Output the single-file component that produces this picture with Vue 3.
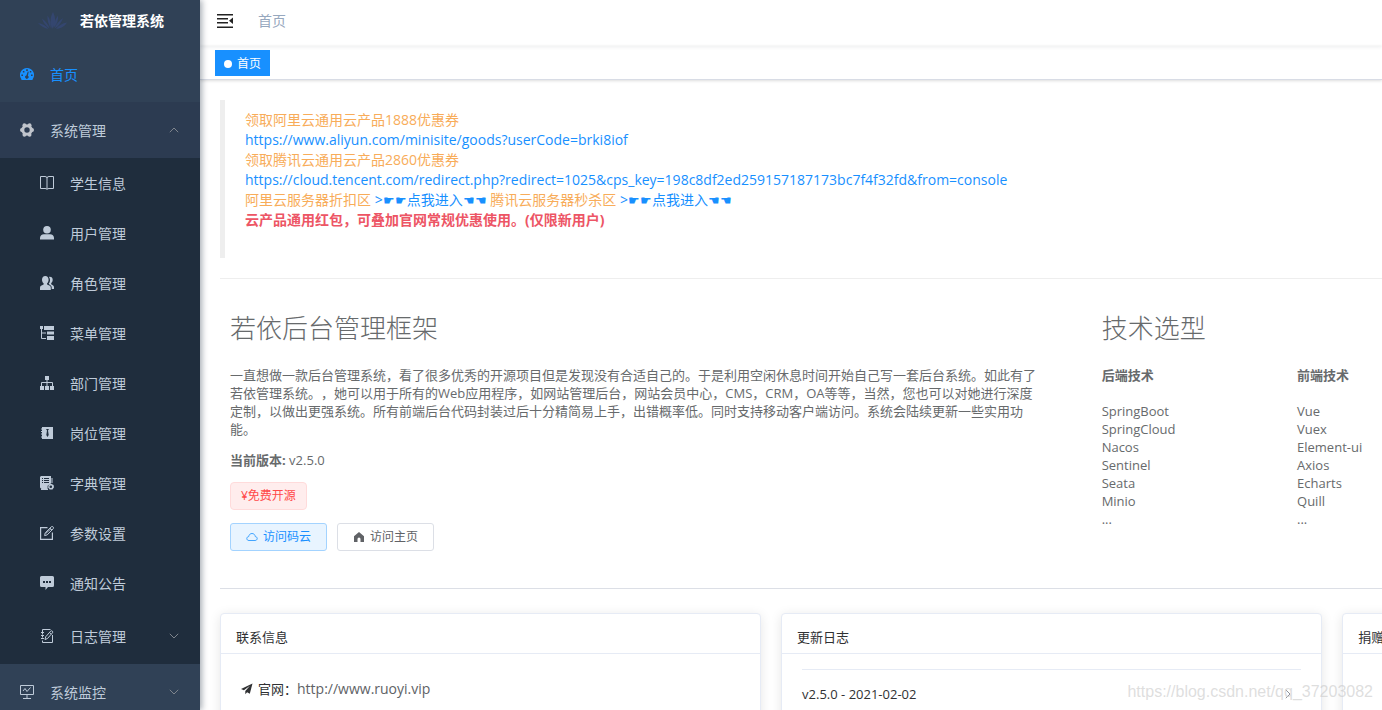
<script setup>
const systemMenu = [
  { label: '学生信息', icon: 'book' },
  { label: '用户管理', icon: 'user' },
  { label: '角色管理', icon: 'peoples' },
  { label: '菜单管理', icon: 'tree-table' },
  { label: '部门管理', icon: 'tree' },
  { label: '岗位管理', icon: 'post' },
  { label: '字典管理', icon: 'dict' },
  { label: '参数设置', icon: 'edit' },
  { label: '通知公告', icon: 'message' }
]
const stacks = [
  { title: '后端技术', items: ['SpringBoot', 'SpringCloud', 'Nacos', 'Sentinel', 'Seata', 'Minio', '...'] },
  { title: '前端技术', items: ['Vue', 'Vuex', 'Element-ui', 'Axios', 'Echarts', 'Quill', '...'] }
]
</script>

<template>
  <div class="shell">
    <svg class="sprite" aria-hidden="true">
      <symbol id="dashboard" viewBox="0 0 14 14">
        <path fill-rule="evenodd" fill="currentColor" d="M7 1a7 7 0 0 1 6 10.600L12.400 13H1.600L1 11.600A7 7 0 0 1 7 1zM6.200 2.200v1.800h1.600V2.200zM2.900 3.900v1.500h1.500V3.900zM9.800 3.900v1.500h1.500V3.900zM1.400 7.600v1.500h1.600V7.600zM11 7.600v1.500h1.600V7.600zM7.800 4.600L6.400 8.400a1.700 1.700 0 1 0 1.500.3l.8-3.900z" />
      </symbol>
      <symbol id="system" viewBox="0 0 14 14">
        <circle cx="7" cy="7" r="4.200" fill="none" stroke="currentColor" stroke-width="3" />
        <g fill="currentColor">
          <circle cx="12.100" cy="7" r="1.900" /><circle cx="1.900" cy="7" r="1.900" />
          <circle cx="9.600" cy="2.200" r="1.900" /><circle cx="4.400" cy="2.200" r="1.900" />
          <circle cx="9.600" cy="11.800" r="1.900" /><circle cx="4.400" cy="11.800" r="1.900" />
        </g>
      </symbol>
      <symbol id="book" viewBox="0 0 14 14">
        <path fill="none" stroke="currentColor" d="M.5.500H5q2 0 2 1.500Q7 .500 9 .500h4.500v12H9q-2 0-2 1 0-1-2-1H.5z" />
        <path fill="none" stroke="currentColor" stroke-width="2" opacity=".5" d="M7 2v11" />
      </symbol>
      <symbol id="user" viewBox="0 0 14 14">
        <circle cx="7" cy="3.800" r="3.800" fill="currentColor" />
        <path fill="currentColor" d="M0 13.600V12c0-2.300 1.600-3.700 4-3.700h6c2.400 0 4 1.400 4 3.700v1.600z" />
      </symbol>
      <symbol id="peoples" viewBox="0 0 14 14">
        <path fill="currentColor" d="M5.300 0c2 0 3.300 1.500 3.300 3.700 0 1.600-.6 2.800-1.500 3.500v1.300l2.700 1.300c.7.400 1 1 1 1.900v2.300H0v-2.300c0-.9.300-1.500 1-1.900l2.600-1.300V7.200C2.600 6.500 2 5.300 2 3.700 2 1.500 3.300 0 5.300 0z" />
        <path fill="currentColor" d="M9 .9c2.200-.4 3.700.8 3.700 2.800 0 1.500-.6 2.700-1.500 3.400v1.100l2 1.200c.5.300.8.900.8 1.600v2h-2.300v-1.500c0-1-.5-1.900-1.300-2.300L8.800 8V7.600c1.400-1.500 1.800-4.400.2-6.700z" />
      </symbol>
      <symbol id="tree-table" viewBox="0 0 14 14">
        <path fill="currentColor" d="M0 0h3v3H0zM4 0h10v4H4zM7 5.500h7v3H7zM7 10h7v4H7z" />
        <path fill="none" stroke="currentColor" d="M1.500 3v9.500H6M1.500 7H6" />
      </symbol>
      <symbol id="tree" viewBox="0 0 14 14">
        <path fill="currentColor" d="M5 0h4v4H5zM0 10h4v4H0zM5 10h4v4H5zM10 10h4v4h-4z" />
        <path fill="none" stroke="currentColor" d="M7 4v6M1.500 10V6.500h11V10" />
      </symbol>
      <symbol id="post" viewBox="0 0 14 14">
        <path fill-rule="evenodd" fill="currentColor" d="M2 1h11v12H2v-1.500H1v-1h1V8.500H1v-1h1V6H1V5h1V3.500H1v-1h1zM6 3l1 1.500L6.300 9l1.200 2 1.200-2L8 4.500 9 3z" />
      </symbol>
      <symbol id="dict" viewBox="0 0 14 14">
        <path fill-rule="evenodd" fill="currentColor" d="M1 0h10v7.300L7.600 9.700V13H1.500L0 11.500V1zM2 2v1h1V2zM4 2v1h5V2zM2 4v1h1V4zM4 4v1h5V4zM2 6v1h1V6zM4 6v1h5V6z" />
        <path fill-rule="evenodd" fill="currentColor" d="M10.600 7.600l3 1.300.4 2.400-1.500 2.100-2.900.2-1.500-2 .6-2.800zM10.800 9.500a1.300 1.300 0 1 0 0 2.600 1.300 1.300 0 0 0 0-2.600zM1 13h7v1H1zM11.500 2h1v5h-1z" />
      </symbol>
      <symbol id="edit" viewBox="0 0 14 14">
        <path fill="none" stroke="currentColor" stroke-width="1.200" d="M7.500 1.600H.6v11.800h11.800V6.500" />
        <path fill="none" stroke="currentColor" d="M4.600 9.600l.6-2.700L11.300.8q1-.7 1.800.1t.1 1.800L7.200 8.900zM10 2.100l1.900 1.900M5.700 7.500L11 2.700" />
      </symbol>
      <symbol id="message" viewBox="0 0 14 14">
        <path fill-rule="evenodd" fill="currentColor" d="M1.500 0h11Q14 0 14 1.500v8q0 1.500-1.500 1.500H8l-2.500 3v-3h-4Q0 11 0 9.500v-8Q0 0 1.500 0zM3 5v2h2V5zM6 5v2h2V5zM9 5v2h2V5z" />
      </symbol>
      <symbol id="log" viewBox="0 0 14 14">
        <path fill="none" stroke="currentColor" d="M2.500 3V.500h8M2.500 11.500v2h10V6M2.500 4v1.500M2.500 7v1.500M1 3.500h3M1 6.500h3M1 9.500h3" />
        <path fill="none" stroke="currentColor" d="M5 10.500l.7-2.700 5-5.700q.8-.7 1.600 0t.2 1.700L7.500 9.500zM9.500 3.500l1.800 1.600" />
      </symbol>
      <symbol id="monitor" viewBox="0 0 14 14">
        <path fill="none" stroke="currentColor" d="M.5.500h13v9H.500zM7 9.500v3.500M3 13.500h8M3 6l2-2.500L7 6.500 10.500 2.500" />
      </symbol>
      <symbol id="chevron" viewBox="0 0 10 6">
        <path fill="none" stroke="currentColor" d="M.8.800L5 5 9.200.800" />
      </symbol>
    </svg>

    <aside class="sidebar">
      <a class="logo" href="#">
        <svg class="lotus" viewBox="0 0 30 18" aria-hidden="true">
          <path d="M14 17C12 11 12 5 15 0c3 6 3 11-1 17zM12.500 16C10.500 12 9 8 9.500 3.500c3 4 3.500 8 3 12.500zM15.500 16c.5-5 2-9 4.500-12.500.5 5-1 9-4.500 12.500zM11.500 16.500C8 14 5 10.500 4 6.500c4 3 6.500 6 7.500 10zM16.500 16.500c1.500-4.500 4.500-7.500 8.500-10.500-1.500 4.500-4.500 8.500-8.500 10.500zM10.500 17C6.500 16.500 3 14 0 11c4.500.5 8 2.500 10.500 6zM18 17c2.500-3.500 6.500-6 11-6.500-2 3.500-6 6-11 6.500z" />
        </svg>
        <strong>若依管理系统</strong>
      </a>
      <nav>
        <a class="item active" href="#"><svg class="icon"><use href="#dashboard" /></svg><span>首页</span></a>
        <button class="item open" type="button">
          <svg class="icon gear"><use href="#system" /></svg><span>系统管理</span>
          <svg class="arrow up"><use href="#chevron" /></svg>
        </button>
        <div class="submenu">
          <a v-for="m in systemMenu" :key="m.label" class="item" href="#">
            <svg class="icon"><use :href="'#' + m.icon" /></svg><span>{{ m.label }}</span>
          </a>
          <button class="item group" type="button">
            <svg class="icon"><use href="#log" /></svg><span>日志管理</span>
            <svg class="arrow"><use href="#chevron" /></svg>
          </button>
        </div>
        <button class="item" type="button">
          <svg class="icon"><use href="#monitor" /></svg><span>系统监控</span>
          <svg class="arrow"><use href="#chevron" /></svg>
        </button>
      </nav>
    </aside>

    <main class="main">
      <header class="navbar">
        <button class="fold" type="button" aria-label="收起菜单">
          <svg viewBox="0 0 16 14"><path fill="currentColor" d="M0 0h16v1.500H0zM0 4h11v1.500H0zM0 8h11v1.500H0zM0 12.500h16V14H0zM16 3.500v6.500L12 6.800z" /></svg>
        </button>
        <span class="crumb">首页</span>
      </header>
      <div class="tags"><a class="tab" href="#"><i></i>首页</a></div>

      <div class="page">
        <blockquote>
          <p>领取阿里云通用云产品1888优惠券</p>
          <p><a href="#">https://www.aliyun.com/minisite/goods?userCode=brki8iof</a></p>
          <p>领取腾讯云通用云产品2860优惠券</p>
          <p><a href="#">https://cloud.tencent.com/redirect.php?redirect=1025&amp;cps_key=198c8df2ed259157187173bc7f4f32fd&amp;from=console</a></p>
          <p>
            阿里云服务器折扣区
            <a href="#">&gt;<small>☛☛</small>点我进入<small>☚☚</small></a>
            腾讯云服务器秒杀区
            <a href="#">&gt;<small>☛☛</small>点我进入<small>☚☚</small></a>
          </p>
          <p class="promo">云产品通用红包，可叠加官网常规优惠使用。(仅限新用户)</p>
        </blockquote>
        <hr>

        <div class="intro">
          <section class="about">
            <h2>若依后台管理框架</h2>
            <p>一直想做一款后台管理系统，看了很多优秀的开源项目但是发现没有合适自己的。于是利用空闲休息时间开始自己写一套后台系统。如此有了若依管理系统。，她可以用于所有的Web应用程序，如网站管理后台，网站会员中心，CMS，CRM，OA等等，当然，您也可以对她进行深度定制，以做出更强系统。所有前端后台代码封装过后十分精简易上手，出错概率低。同时支持移动客户端访问。系统会陆续更新一些实用功能。</p>
            <p class="version"><b>当前版本:</b> <span>v2.5.0</span></p>
            <span class="free">¥免费开源</span>
            <div class="actions">
              <button class="primary" type="button">
                <svg viewBox="0 0 12 12"><path fill="none" stroke="currentColor" stroke-width=".8" d="M3 9.500C1.500 9.500.8 8.600.8 7.500S1.600 5.700 2.700 5.600C3 3.700 4.200 2.500 6 2.500s3 1.200 3.300 3.100c1.100.1 1.900.8 1.900 1.900s-.8 2-2.200 2z" /></svg>
                <span>访问码云</span>
              </button>
              <button type="button">
                <svg viewBox="0 0 12 12"><path fill="currentColor" d="M6 1l5 4.300V11H7.500V8a1.500 1.500 0 0 0-3 0v3H1V5.300z" /></svg>
                <span>访问主页</span>
              </button>
            </div>
          </section>
          <section class="tech">
            <h2>技术选型</h2>
            <div class="stacks">
              <div v-for="s in stacks" :key="s.title">
                <h4>{{ s.title }}</h4>
                <ul><li v-for="i in s.items" :key="i">{{ i }}</li></ul>
              </div>
            </div>
          </section>
        </div>
        <hr class="divider">

        <div class="cards">
          <article class="card">
            <h3>联系信息</h3>
            <p class="contact">
              <svg viewBox="0 0 12 12"><path fill="currentColor" d="M11.500.5L0 6l2.900 1.300L9 2.800 4.300 7.900v3.300l1.800-2 2.700 1.600z" /></svg>
              <span>官网：</span><a href="#">http://www.ruoyi.vip</a>
            </p>
          </article>
          <article class="card">
            <h3>更新日志</h3>
            <div class="logs">
              <button type="button"><span>v2.5.0 - 2021-02-02</span><svg class="arrow right"><use href="#chevron" /></svg></button>
            </div>
          </article>
          <article class="card"><h3>捐赠</h3></article>
        </div>
      </div>
    </main>
    <span class="watermark">https://blog.csdn.net/qq_37203082</span>
  </div>
</template>

<style>
html, body { overflow: hidden; background: #fff; }
</style>

<style scoped>
* { box-sizing: border-box; }
.shell {
  display: flex;
  height: 100vh;
  position: relative;
  overflow: hidden;
  font-family: "Open Sans", "Noto Sans CJK SC", sans-serif;
  font-size: 13px;
  line-height: 18px;
  color: #676a6c;
  text-spacing-trim: space-all;
}
h2, h3, h4, p, ul, blockquote, hr { margin: 0; padding: 0; }
ul { list-style: none; }
a { color: inherit; text-decoration: none; }
button { font: inherit; color: inherit; margin: 0; cursor: pointer; }
.sprite { position: absolute; width: 0; height: 0; }

.sidebar {
  flex: none;
  width: 200px;
  background: #304156;
  box-shadow: 2px 0 6px rgba(0, 21, 41, .35);
  z-index: 2;
  overflow: hidden;
}
.logo {
  display: flex;
  align-items: center;
  gap: 12px;
  height: 46px;
  padding: 0 0 4px 38px;
  color: #fff;
  font-size: 14px;
}
.lotus { width: 30px; height: 18px; fill: #34466f; }
.item {
  display: flex;
  align-items: center;
  width: 100%;
  height: 56px;
  padding: 0 21px 0 20px;
  border: 0;
  background: #304156;
  color: #bfcbd9;
  font-size: 14px;
  text-align: left;
}
.item span { padding-top: 2px; }
.icon { width: 14px; height: 14px; margin-right: 16px; flex: none; }
.active { color: #1890ff; }
.open { background: #2c3b51; }
.gear { color: #c0c4cc; }
.submenu .item { height: 50px; padding-left: 40px; background: #1f2d3d; }
.submenu .group { height: 56px; }
.arrow { width: 10px; height: 6px; margin-left: auto; color: #909399; flex: none; }
.item .arrow { color: #7f858d; }
.up { transform: rotate(180deg); }
.right { transform: rotate(-90deg); }

.main { flex: 1; min-width: 0; overflow: hidden; }
.navbar {
  display: flex;
  align-items: center;
  height: 46px;
  padding: 0 17px 5px;
  gap: 25px;
  box-shadow: 0 1px 4px rgba(0, 21, 41, .08);
}
.fold { border: 0; padding: 0; background: none; color: #222; height: 14px; }
.fold svg { display: block; width: 16px; height: 14px; }
.crumb { font-size: 14px; color: #97a8be; }
.tags {
  height: 34px;
  padding: 4px 15px;
  border-bottom: 1px solid #d8dce5;
  box-shadow: 0 1px 3px rgba(0, 0, 0, .12), 0 0 3px rgba(0, 0, 0, .04);
}
.tab {
  display: inline-flex;
  align-items: center;
  height: 26px;
  padding: 2px 9px 0;
  background: #1890ff;
  color: #fff;
  font-size: 12px;
}
.tab i { width: 8px; height: 8px; margin-right: 5px; border-radius: 50%; background: #fff; }

/* The dashboard is wider than the visible pane and is clipped on the right. */
.page { width: 144.1%; padding: 20px; }
blockquote {
  padding: 10px 20px 28px;
  border-left: 5px solid #eee;
  font-size: 14px;
  line-height: 20px;
  color: #f8ac59;
}
blockquote p { height: 20px; }
blockquote a { color: #1890ff; }
small { font-size: 13px; line-height: 1; }
.promo { color: #ed5565; font-weight: 700; }
hr { border: 0; border-top: 1px solid #eee; margin-top: 20px; }
.intro { display: grid; grid-template-columns: 1fr 1fr; margin: 0 -10px; }
.about { padding: 31px 10px 0 20px; }
.tech { padding: 31px 10px 0 50px; }
h2 { font-size: 26px; font-weight: 300; line-height: 36px; margin-bottom: 20px; }
.version { margin: 13px 0; }
.free {
  display: inline-block;
  height: 28px;
  padding: 0 10px;
  border: 1px solid #ffdbdb;
  border-radius: 4px;
  background: #ffeded;
  color: #ff4949;
  font-size: 12px;
  line-height: 26px;
  vertical-align: top;
}
.actions { display: flex; gap: 10px; margin-top: 13px; }
.actions button {
  display: flex;
  align-items: center;
  gap: 5px;
  height: 28px;
  padding: 0 15px;
  border: 1px solid #dcdfe6;
  border-radius: 3px;
  background: #fff;
  color: #606266;
  font-size: 12px;
}
.actions svg { width: 12px; height: 12px; }
.actions .primary { color: #1890ff; background: #e8f4ff; border-color: #a3d3ff; }
.stacks { display: grid; grid-template-columns: repeat(4, 1fr); }
h4 { font-size: 13px; margin-bottom: 18px; }
.divider { border-color: #dcdfe6; margin: 37px 0 24px; }
.cards { display: grid; grid-template-columns: repeat(3, 1fr); gap: 20px; }
.card {
  min-height: 240px;
  border: 1px solid #e6ebf5;
  border-radius: 4px;
  background: #fff;
  color: #303133;
  box-shadow: 0 2px 12px rgba(0, 0, 0, .1);
}
h3 {
  padding: 14px 15px 7px;
  border-bottom: 1px solid #e6ebf5;
  font-size: 13px;
  font-weight: 400;
}
.contact { display: flex; align-items: center; padding: 26px 20px; }
.contact svg { width: 12px; height: 12px; margin-right: 5px; }
.contact a { font-size: 14px; color: #606266; }
.logs { margin: 15px 20px; border-top: 1px solid #e6ebf5; }
.logs button {
  display: flex;
  align-items: center;
  width: 100%;
  height: 48px;
  padding: 0 8px 0 0;
  border: 0;
  background: none;
}
.watermark {
  position: absolute;
  right: 9px;
  bottom: 9px;
  z-index: 3;
  font: 16px/18px "Liberation Sans", sans-serif;
  color: rgba(200, 200, 200, .6);
}
</style>
